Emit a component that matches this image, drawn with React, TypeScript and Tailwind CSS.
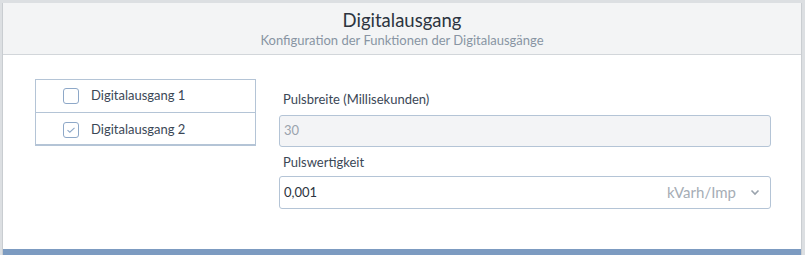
import React from 'react';

const font = { fontFamily: 'Lato, "Noto Sans", sans-serif' };

const Item: React.FC<{ label: string; checked?: boolean; last?: boolean }> = ({ label, checked, last }) => (
  <div className={`flex items-center h-[33px] pl-[27px] ${last ? '' : 'border-b border-[#b4c4d6]'}`}>
    <span className="w-[16px] h-[16px] rounded-[3px] border border-[#8ea8c8] bg-white flex items-center justify-center">
      {checked && (
        <svg width="10" height="8" viewBox="0 0 10 8" fill="none">
          <path d="M1.5 4.2 L3.8 6.2 L8.5 1.8" stroke="#8ea8c8" strokeWidth="1.1" />
        </svg>
      )}
    </span>
    <span className="ml-[12px] text-[13px] text-[#3b4756]">{label}</span>
  </div>
);

export default function App() {
  return (
    <div className="w-[805px] h-[255px] bg-[#dcdfe2] pt-[3px] pl-[2px] pr-[3px]" style={font}>
      <div className="h-full flex flex-col bg-white border-x border-[#c9cdd1]">
        <div className="h-[52px] bg-[#f3f4f5] border-b border-[#d2d6da] flex flex-col items-center pt-[5px]">
          <div className="text-[18.5px] leading-[24px] text-[#2c3440]">Digitalausgang</div>
          <div className="text-[13px] leading-[17px] text-[#8894a3]">Konfiguration der Funktionen der Digitalausgänge</div>
        </div>
        <div className="flex-1 flex pl-[32px] pr-[30px] pt-[24px]">
          <div className="w-[221px] h-[67px] border border-b-2 border-[#b4c4d6] self-start">
            <Item label="Digitalausgang 1" />
            <Item label="Digitalausgang 2" checked last />
          </div>
          <div className="flex-1 ml-[23px] pt-[11px]">
            <div className="text-[13px] text-[#3b4756] leading-[18px] pl-[4px]">Pulsbreite (Millisekunden)</div>
            <div className="mt-[7px] h-[32px] rounded-[3px] border border-[#b4c4d6] bg-[#f3f4f6] flex items-center px-[4px] text-[13px] text-[#9aa3ad]">30</div>
            <div className="mt-[6px] text-[13px] text-[#3b4756] leading-[18px] pl-[4px]">Pulswertigkeit</div>
            <div className="mt-[5px] h-[33px] rounded-[3px] border border-[#b4c4d6] bg-white flex items-center pl-[4px] pr-[10px] text-[13px]">
              <span className="text-[#2c3440]">0,001</span>
              <span className="ml-auto text-[15px] text-[#a6adb5]">kVarh/Imp</span>
              <svg className="ml-[14px]" width="10" height="7" viewBox="0 0 10 7" fill="none">
                <path d="M1.5 1.5 L5 5 L8.5 1.5" stroke="#9aa3ad" strokeWidth="1.6" />
              </svg>
            </div>
          </div>
        </div>
        <div className="h-[6px] bg-[#7c9bc1]" />
      </div>
    </div>
  );
}
